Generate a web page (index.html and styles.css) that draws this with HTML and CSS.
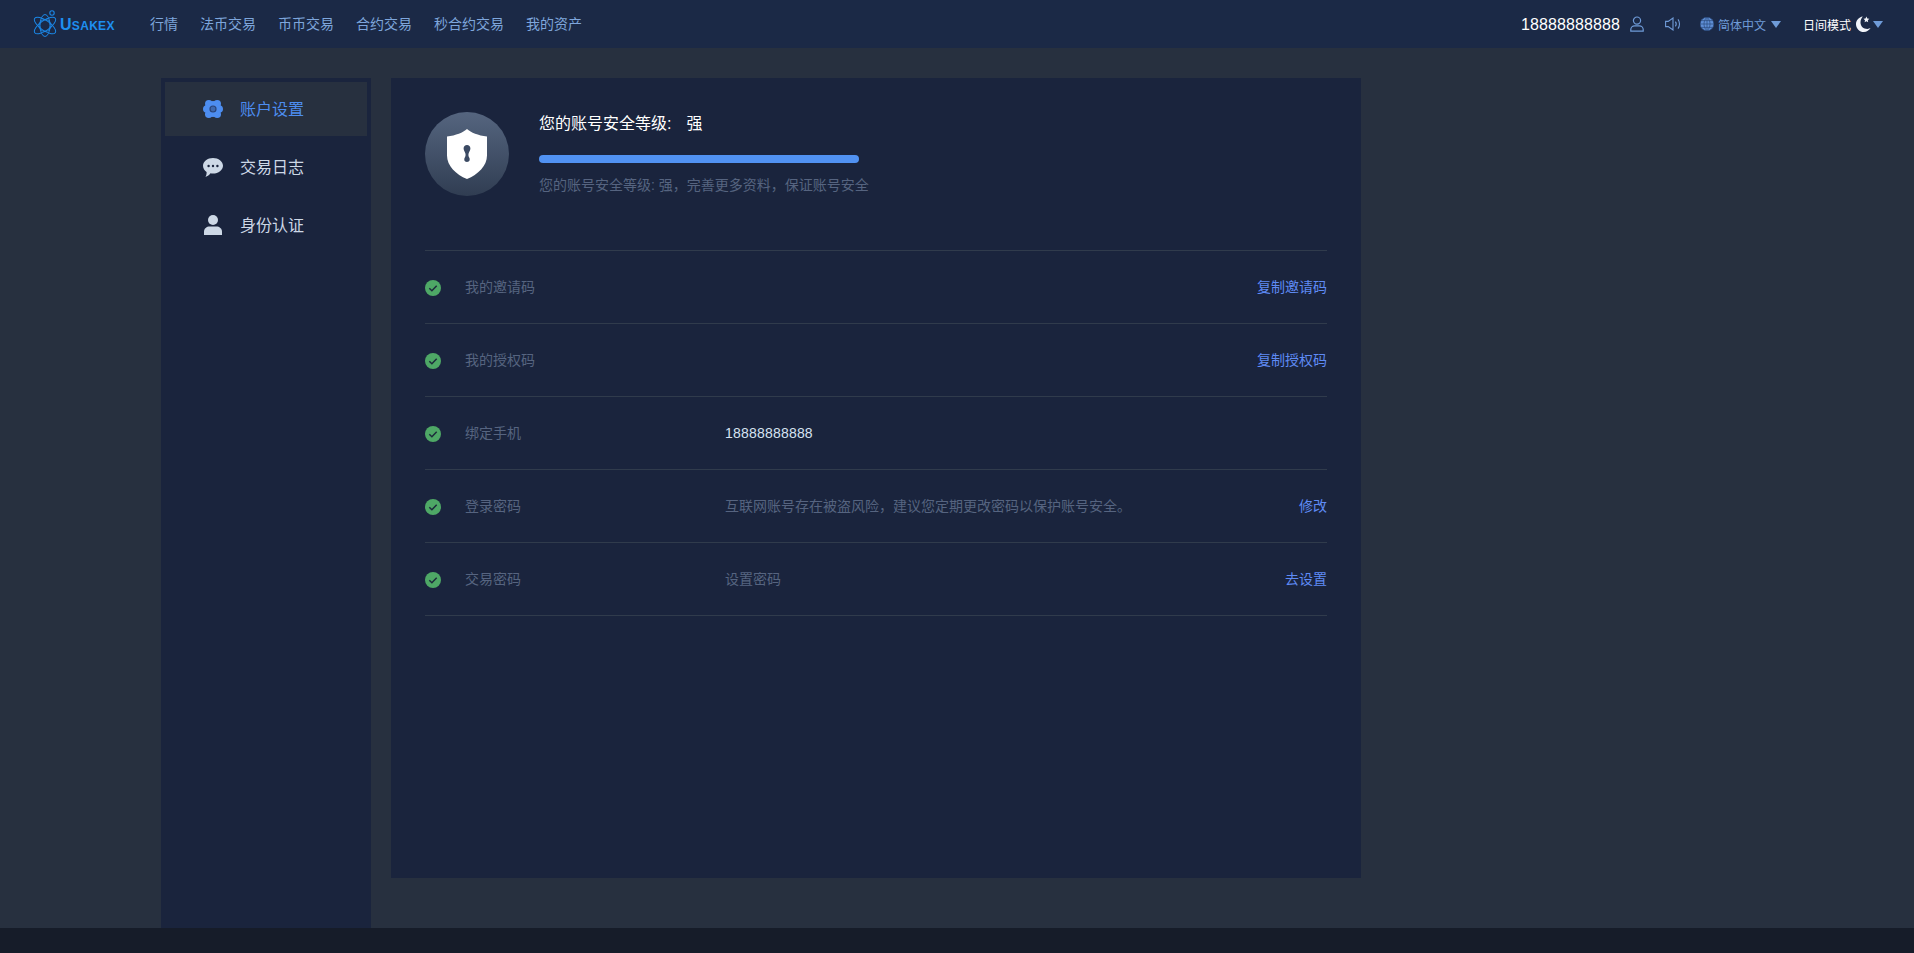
FILE: index.html
```html
<!DOCTYPE html>
<html lang="zh-CN">
<head>
<meta charset="utf-8">
<title>Usakex</title>
<link rel="stylesheet" href="styles.css">
</head>
<body>
<header class="topbar">
  <div class="logo">
    <svg class="logo-mark" width="25" height="29" viewBox="0 0 25 29" fill="none" stroke="#1b87e6" stroke-width="1">
      <ellipse cx="12" cy="15.500" rx="11" ry="5" transform="rotate(90 12 15.500)"/>
      <ellipse cx="12" cy="15.500" rx="12.500" ry="5" transform="rotate(35 12 15.500)"/>
      <ellipse cx="12" cy="15.500" rx="12.500" ry="5" transform="rotate(-35 12 15.500)"/>
      <circle cx="12" cy="15.500" r="6" stroke-width=".9"/>
      <circle cx="19" cy="3" r="2.200" stroke-width="1.100"/>
    </svg>
    <span class="logo-text"><span class="logo-cap">U</span>SAKEX</span>
  </div>
  <nav class="nav">
    <a>行情</a><a>法币交易</a><a>币币交易</a><a>合约交易</a><a>秒合约交易</a><a>我的资产</a>
  </nav>
  <div class="top-right">
    <span class="phone">18888888888</span>
    <svg class="i-user" width="14" height="16" viewBox="0 0 14 16" fill="none" stroke="#6f9bd8" stroke-width="1.200">
      <circle cx="7" cy="4.600" r="3.600"/>
      <path d="M.8 15.200v-1.600c0-2.200 1.800-3.800 3.800-3.800h4.800c2 0 3.800 1.600 3.800 3.800v1.600z"/>
    </svg>
    <svg class="i-sound" width="16" height="14" viewBox="0 0 16 14" fill="none" stroke="#6f9bd8" stroke-width="1.100">
      <path d="M.6 4.400h2.600L8 1v12L3.200 9.600H.6z"/>
      <path d="M10.400 4.600c1 1.400 1 3.400 0 4.800M13 2.400c2 2.600 2 6.600 0 9.200"/>
    </svg>
    <span class="lang">
      <svg width="14" height="14" viewBox="0 0 14 14" fill="#5f8fd6" stroke="#2c4a7c" stroke-width=".7">
        <circle cx="7" cy="7" r="6.800"/>
        <path fill="none" d="M.4 7h13.200M1.400 3.600h11.200M1.400 10.400h11.200M7 .2v13.600M7 .2C3 3.500 3 10.500 7 13.800M7 .2c4 3.300 4 10.300 0 13.600"/>
      </svg>
      <span class="lang-label">简体中文</span>
      <i class="caret"></i>
    </span>
    <span class="mode">
      <span class="mode-label">日间模式</span>
      <svg width="16" height="16" viewBox="0 0 16 16">
        <path fill="#f2f5fa" d="M6.800.4C2.800 1 0 4.300 0 8.200 0 12.500 3.500 16 7.800 16c2.900 0 5.400-1.500 6.800-3.900-.8.500-2 .8-3.200.8-4 0-6.900-2.800-6.900-6.500 0-2.400.9-4.600 2.300-6z"/>
        <path fill="#f2f5fa" d="M10.400.6l.9 1.900 2 .3-1.500 1.400.4 2-1.800-1-1.800 1 .4-2-1.500-1.400 2-.3z"/>
      </svg>
      <i class="caret"></i>
    </span>
  </div>
</header>

<div class="page">
  <aside class="sidebar">
    <a class="side-item active">
      <svg width="20" height="18" viewBox="0 0 20 18">
        <g fill="#4d8df0">
          <circle cx="5.800" cy="3.800" r="3.800"/><circle cx="14.200" cy="3.800" r="3.800"/>
          <circle cx="3.800" cy="9" r="3.800"/><circle cx="16.200" cy="9" r="3.800"/>
          <circle cx="5.800" cy="14.200" r="3.800"/><circle cx="14.200" cy="14.200" r="3.800"/>
          <circle cx="10" cy="9" r="8"/>
        </g>
        <circle cx="10" cy="9" r="3.600" fill="#2a4478"/>
        <circle cx="10" cy="9" r="2.400" fill="#3f68ad"/>
      </svg>
      <span class="side-text">账户设置</span>
    </a>
    <a class="side-item">
      <svg width="20" height="19" viewBox="0 0 20 19">
        <path fill="#cdd8e6" d="M10 0c5.500 0 10 3.500 10 7.800s-4.500 7.800-10 7.800c-.9 0-1.700-.1-2.500-.3C6.300 16.800 4.600 18.400 2.400 19c.9-1.300 1.300-2.800 1.200-5C1.400 12.600 0 10.300 0 7.800 0 3.500 4.500 0 10 0z"/>
        <circle cx="5.600" cy="8" r="1.200" fill="#1a243d"/><circle cx="10" cy="8" r="1.200" fill="#1a243d"/><circle cx="14.400" cy="8" r="1.200" fill="#1a243d"/>
      </svg>
      <span class="side-text">交易日志</span>
    </a>
    <a class="side-item">
      <svg width="20" height="20" viewBox="0 0 20 20">
        <circle cx="10" cy="5" r="5" fill="#cdd8e6"/>
        <path fill="#cdd8e6" d="M1 20v-3.500C1 13.500 3.800 11.500 6.500 11.500h7c2.700 0 5.500 2 5.500 5V20z"/>
      </svg>
      <span class="side-text">身份认证</span>
    </a>
  </aside>

  <main class="panel">
    <section class="level">
      <div class="badge">
        <svg width="40" height="50" viewBox="0 0 40 50">
          <path fill="#fff" d="M20 0c4 3.500 11 6.500 20 7.500v19C40 37 31 45.500 20 50 9 45.500 0 37 0 26.500v-19C9 6.500 16 3.500 20 0z"/>
          <path fill="#3b4a63" d="M20 16c2 0 3.400 1.500 3.400 3.400 0 1.800-1.300 3.100-1.800 5-.4 1.500-.1 3 .7 4.400.8 1.500.6 4.200-2.300 4.200s-3.100-2.700-2.300-4.200c.8-1.400 1.100-2.900.7-4.400-.5-1.900-1.800-3.200-1.800-5 0-1.900 1.400-3.400 3.400-3.400z"/>
        </svg>
      </div>
      <div class="level-info">
        <div class="level-title"><span>您的账号安全等级:</span><span>强</span></div>
        <div class="bar"></div>
        <div class="level-desc">您的账号安全等级: 强，完善更多资料，保证账号安全</div>
      </div>
    </section>

    <ul class="rows">
      <li class="row">
        <svg class="check" width="16" height="16" viewBox="0 0 16 16"><circle cx="8" cy="8" r="8" fill="#4ea866"/><path d="M4.300 8.300l2.600 2.500 4.800-5" fill="none" stroke="#1d2b3c" stroke-width="1.500"/></svg>
        <span class="label">我的邀请码</span><span class="value"></span><a class="action">复制邀请码</a>
      </li>
      <li class="row">
        <svg class="check" width="16" height="16" viewBox="0 0 16 16"><circle cx="8" cy="8" r="8" fill="#4ea866"/><path d="M4.300 8.300l2.600 2.500 4.800-5" fill="none" stroke="#1d2b3c" stroke-width="1.500"/></svg>
        <span class="label">我的授权码</span><span class="value"></span><a class="action">复制授权码</a>
      </li>
      <li class="row">
        <svg class="check" width="16" height="16" viewBox="0 0 16 16"><circle cx="8" cy="8" r="8" fill="#4ea866"/><path d="M4.300 8.300l2.600 2.500 4.800-5" fill="none" stroke="#1d2b3c" stroke-width="1.500"/></svg>
        <span class="label">绑定手机</span><span class="value strong">18888888888</span>
      </li>
      <li class="row">
        <svg class="check" width="16" height="16" viewBox="0 0 16 16"><circle cx="8" cy="8" r="8" fill="#4ea866"/><path d="M4.300 8.300l2.600 2.500 4.800-5" fill="none" stroke="#1d2b3c" stroke-width="1.500"/></svg>
        <span class="label">登录密码</span><span class="value">互联网账号存在被盗风险，建议您定期更改密码以保护账号安全。</span><a class="action">修改</a>
      </li>
      <li class="row">
        <svg class="check" width="16" height="16" viewBox="0 0 16 16"><circle cx="8" cy="8" r="8" fill="#4ea866"/><path d="M4.300 8.300l2.600 2.500 4.800-5" fill="none" stroke="#1d2b3c" stroke-width="1.500"/></svg>
        <span class="label">交易密码</span><span class="value">设置密码</span><a class="action">去设置</a>
      </li>
    </ul>
  </main>
</div>
<footer class="footer"></footer>
</body>
</html>
```
FILE: styles.css
```css
* { box-sizing: border-box; }
html, body { margin: 0; height: 100%; }
body {
  width: 1914px;
  height: 953px;
  overflow: hidden;
  display: flex;
  flex-direction: column;
  background: #27303f;
  font-family: "Liberation Sans", "Noto Sans CJK SC", sans-serif;
  font-size: 14px;
  color: #cdd8e6;
}
a { cursor: pointer; }

.topbar {
  height: 48px;
  flex: none;
  display: flex;
  align-items: center;
  padding-left: 33px;
  padding-right: 31px;
  background: #1b2946;
}
.logo { width: 117px; display: flex; align-items: center; }
.logo-mark { flex: none; margin-right: 2px; }
.logo-text { color: #1e8ff0; font-weight: 700; font-size: 12px; letter-spacing: .3px; line-height: 20px; padding-top: 3px; }
.logo-cap { font-size: 16px; }

.nav { display: flex; gap: 22px; color: #7ea6dc; }
.nav a { line-height: 20px; }

.top-right { margin-left: auto; display: flex; align-items: center; }
.phone { color: #fff; font-size: 16px; letter-spacing: .1px; margin-right: 10px; padding-top: 1px; }
.i-user { margin-right: 21px; }
.i-sound { margin-right: 19px; }
.lang { display: flex; align-items: center; color: #6f9bd8; font-size: 12px; margin-right: 22px; }
.lang-label { margin: 0 5px 0 4px; }
.mode { display: flex; align-items: center; color: #fff; font-size: 12px; }
.mode-label { margin-right: 5px; }
.caret {
  width: 0;
  height: 0;
  border-left: 5.500px solid transparent;
  border-right: 5.500px solid transparent;
  border-top: 7px solid #6f9bd8;
  margin-left: 1px;
}
.lang .caret { margin-left: 0; }

.page {
  flex: 1;
  display: flex;
  align-items: flex-start;
  gap: 20px;
  padding: 30px 0 0 161px;
  min-height: 0;
}

.sidebar {
  width: 210px;
  height: 850px;
  padding: 4px;
  background: #1a243d;
  display: flex;
  flex-direction: column;
  gap: 4px;
}
.side-item {
  height: 54px;
  display: flex;
  align-items: center;
  gap: 17px;
  padding-left: 38px;
  font-size: 16px;
  color: #cdd8e6;
}
.side-text { padding-bottom: 2px; }
.side-item.active { background: #27303f; color: #4d8df0; }

.panel {
  width: 970px;
  height: 800px;
  padding: 34px;
  background: #1a243d;
}
.level { display: flex; gap: 30px; height: 138px; }
.badge {
  width: 84px;
  height: 84px;
  flex: none;
  border-radius: 50%;
  display: flex;
  align-items: center;
  justify-content: center;
  background: linear-gradient(#55657f, #303d52);
}
.level-title {
  display: flex;
  gap: 15px;
  color: #fff;
  font-size: 16px;
  line-height: 22px;
  padding-top: 1px;
}
.bar { width: 320px; height: 8px; margin-top: 20px; border-radius: 4px; background: #5192f2; }
.level-desc { margin-top: 12px; line-height: 20px; color: #566480; }

.rows { list-style: none; margin: 0; padding: 0; border-top: 1px solid #303b4c; }
.row {
  height: 73px;
  display: flex;
  align-items: center;
  border-bottom: 1px solid #303b4c;
}
.check { flex: none; margin: 2px 24px 0 0; }
.label { width: 260px; flex: none; color: #566480; padding-bottom: 2px; }
.value { flex: 1; color: #566480; padding-bottom: 2px; }
.value.strong { color: #d6e2f2; letter-spacing: .2px; padding-bottom: 0; }
.action { color: #5f8bf5; padding-bottom: 2px; }

.footer { height: 25px; flex: none; background: #161c29; }
```
